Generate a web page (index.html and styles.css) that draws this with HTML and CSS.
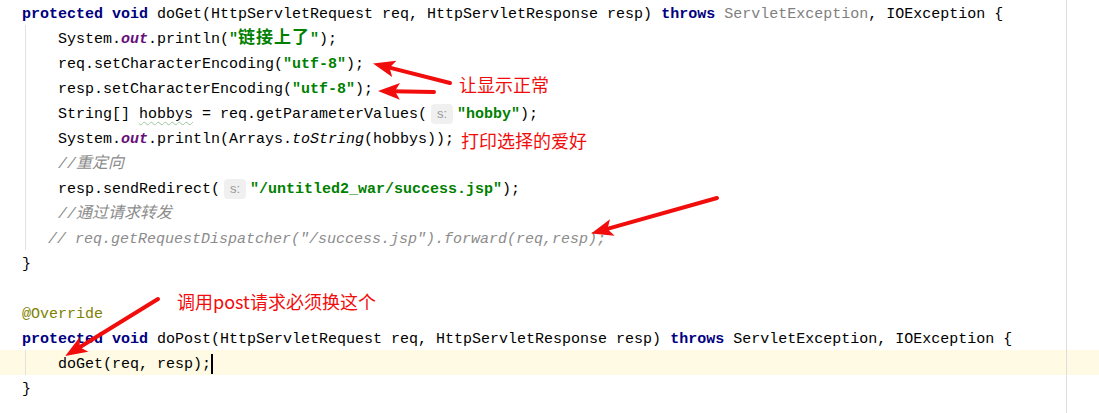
FILE: index.html
```html
<!DOCTYPE html>
<html lang="zh-CN">
<head>
    <meta charset="UTF-8">
    <title>doGet / doPost</title>
    <link rel="stylesheet" href="styles.css">
</head>
<body>
    <div class="editor">
        <div class="line"><span class="kw">protected void</span> doGet(HttpServletRequest req, HttpServletResponse resp) <span class="kw">throws</span> <span class="unused">ServletException</span>, IOException {</div>
        <div class="block">
            <div class="line">System.<span class="field">out</span>.println(<span class="str">"<span class="cjk cjk-str">链接上了</span>"</span>);</div>
            <div class="line">req.setCharacterEncoding(<span class="str">"utf-8"</span>);</div>
            <div class="line">resp.setCharacterEncoding(<span class="str">"utf-8"</span>);</div>
            <div class="line">String[] <span class="typo">hobbys</span> = req.getParameterValues(<span class="hint">s:</span><span class="str">"hobby"</span>);</div>
            <div class="line">System.<span class="field">out</span>.println(Arrays.<span class="static">toString</span>(hobbys));</div>
            <div class="line"><span class="cmt">//<span class="cjk">重定向</span></span></div>
            <div class="line">resp.sendRedirect(<span class="hint">s:</span><span class="str">"/untitled2_war/success.jsp"</span>);</div>
            <div class="line"><span class="cmt">//<span class="cjk">通过请求转发</span></span></div>
            <div class="line outdent"><span class="cmt">// req.getRequestDispatcher("/success.jsp").forward(req,resp);</span></div>
        </div>
        <div class="line">}</div>
        <div class="line"></div>
        <div class="line"><span class="anno">@Override</span></div>
        <div class="line"><span class="kw">protected void</span> doPost(HttpServletRequest req, HttpServletResponse resp) <span class="kw">throws</span> ServletException, IOException {</div>
        <div class="current">
            <div class="block">
                <div class="line">doGet(req, resp);<span class="caret"></span></div>
            </div>
        </div>
        <div class="line">}</div>

        <!-- right margin guide -->
        <div class="margin-line"></div>

        <!-- screenshot annotations -->
        <div class="note note-encoding">让显示正常</div>
        <div class="note note-print">打印选择的爱好</div>
        <div class="note note-post">调用post请求必须换这个</div>

        <svg class="arrows" width="1099" height="413" viewBox="0 0 1099 413">
            <defs>
                <marker id="head" markerUnits="userSpaceOnUse" markerWidth="24" markerHeight="20" refX="8" refY="9" orient="auto">
                    <path d="M0,0.5 L22,9 L0,17.5 L5,9 Z" fill="#f20d0d"/>
                </marker>
            </defs>
            <line x1="450" y1="83" x2="386.6" y2="66.9" marker-end="url(#head)"/>
            <line x1="434" y1="92" x2="392" y2="91.2" marker-end="url(#head)"/>
            <line x1="717" y1="198" x2="604.6" y2="229.7" marker-end="url(#head)"/>
            <line x1="158" y1="299" x2="77.2" y2="348.7" marker-end="url(#head)"/>
        </svg>
    </div>
</body>
</html>
```

FILE: styles.css
```css
body {
    margin: 0;
    background-color: #fff;
}

.editor {
    position: relative;
    height: 413px;
    overflow: hidden;
    font-family: "Liberation Mono", "Noto Sans CJK SC", monospace;
    font-size: 15px;
    color: #000;
}

/* rows are 25px apart, text sits a little low like the IDE does */
.line {
    height: 25px;
    line-height: 29px;
    white-space: pre;
    padding-left: 22px;
}

/* indent guide + body of a method */
.block {
    margin-left: 25px;
    border-left: 1px solid #e2e2e2;
}

.block .line {
    padding-left: 32px;
}

.block .line.outdent {
    padding-left: 22px;
}

.current {
    background-color: #fffae3;
}

/* syntax colours */
.kw {
    color: #000080;
    font-weight: bold;
}

.str {
    color: #008000;
    font-weight: bold;
}

.field {
    color: #660e7a;
    font-style: italic;
    font-weight: bold;
}

.static {
    font-style: italic;
}

.cmt {
    color: #8c8c8c;
    font-style: italic;
}

.unused {
    color: #808080;
}

.anno {
    color: #808000;
}

.typo {
    text-decoration: underline wavy #9cc49c;
    text-decoration-thickness: 1px;
    text-underline-offset: 3px;
}

.cjk {
    font-family: "Noto Sans CJK SC", sans-serif;
    font-size: 16px;
    line-height: 0;
}

.cjk-str {
    font-size: 17px;
    letter-spacing: 1px;
}

/* parameter name hint */
.hint {
    display: inline-block;
    width: 22px;
    height: 20px;
    line-height: 20px;
    margin: 0 4px;
    background-color: #f0f0f0;
    border-radius: 4px;
    color: #999;
    font-family: "Liberation Sans", sans-serif;
    font-size: 13px;
    font-weight: normal;
    text-align: center;
    vertical-align: middle;
}

.caret {
    display: inline-block;
    width: 2px;
    height: 20px;
    background-color: #000;
    vertical-align: middle;
}

.margin-line {
    position: absolute;
    top: 0;
    bottom: 0;
    left: 1066px;
    width: 1px;
    background-color: #dedede;
}

/* red annotations drawn on the screenshot */
.note {
    position: absolute;
    color: #f20d0d;
    font-family: "Noto Sans CJK SC", sans-serif;
    font-size: 18px;
    line-height: 1;
    white-space: nowrap;
}

.note-encoding {
    left: 459px;
    top: 75px;
}

.note-print {
    left: 461px;
    top: 131px;
}

.note-post {
    left: 177px;
    top: 292px;
}

.arrows {
    position: absolute;
    top: 0;
    left: 0;
    pointer-events: none;
}

.arrows line {
    stroke: #f20d0d;
    stroke-width: 4;
    stroke-linecap: round;
}
```
